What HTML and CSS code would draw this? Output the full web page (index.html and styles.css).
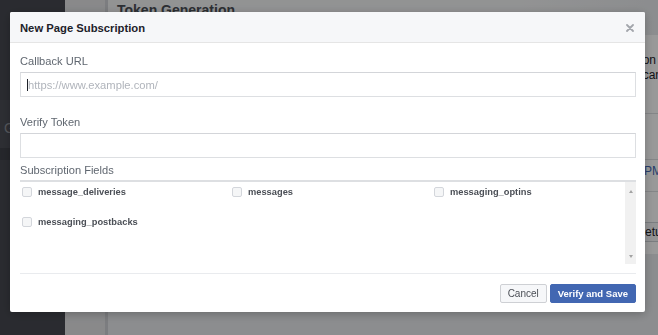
FILE: index.html
```html
<!DOCTYPE html>
<html>
<head>
<meta charset="utf-8">
<link rel="stylesheet" href="styles.css">
</head>
<body>
<div class="page">
  <aside class="sidebar">
    <div class="side-gap"></div>
    <div class="side-item">G</div>
    <div class="side-band"></div>
  </aside>
  <div class="rail"></div>
  <main class="main">
    <div class="main-title">Token Generation</div>
    <div class="card">
      <div class="sec sec1">
        <div class="rt">This page access token has permission i</div>
        <div class="rt">You can</div>
      </div>
      <div class="sec sec2"></div>
      <div class="sec sec3"><div class="rt link">12:00 PM</div></div>
      <div class="sec sec4"><div class="rbox">Setu</div></div>
    </div>
  </main>
</div>

<div class="overlay">
  <div class="modal">
    <div class="modal-header">
      <div class="modal-title">New Page Subscription</div>
      <svg class="close" width="8" height="8" viewBox="0 0 8 8"><path d="M1 1L7 7M7 1L1 7" stroke="#a3a6ac" stroke-width="1.8" stroke-linecap="round"/></svg>
    </div>
    <div class="modal-body">
      <div class="label first">Callback URL</div>
      <div class="input"><span class="caret"></span><span class="ph">https://www.example.com/</span></div>
      <div class="label second">Verify Token</div>
      <div class="input"></div>
      <div class="label third">Subscription Fields</div>
      <div class="fields">
        <div class="field-grid">
          <div class="field"><span class="cb"></span><span class="fl">message_deliveries</span></div>
          <div class="field"><span class="cb"></span><span class="fl">messages</span></div>
          <div class="field"><span class="cb"></span><span class="fl">messaging_optins</span></div>
          <div class="field"><span class="cb"></span><span class="fl">messaging_postbacks</span></div>
        </div>
        <div class="scrollbar">
          <span class="arr up"></span>
          <span class="arr down"></span>
        </div>
      </div>
    </div>
    <div class="modal-footer">
      <button class="btn cancel">Cancel</button>
      <button class="btn primary">Verify and Save</button>
    </div>
  </div>
</div>
</body>
</html>
```

FILE: styles.css
```css
html, body {
  margin: 0;
  padding: 0;
  width: 658px;
  height: 335px;
  overflow: hidden;
  font-family: "Liberation Sans", Arial, Helvetica, sans-serif;
}

.page {
  display: flex;
  width: 658px;
  height: 335px;
  background: #e9ebee;
}

.sidebar {
  width: 65px;
  flex: none;
  background: #474951;
  display: flex;
  flex-direction: column;
}
.side-gap { height: 100px; }
.side-item {
  color: #8d9099;
  font-size: 14px;
  padding-left: 4px;
  height: 48px;
  line-height: 56px;
  background: #4c4e56;
}
.side-band {
  height: 12px;
  background: #3f4149;
}

.rail {
  width: 40px;
  flex: none;
  background: #e4e5e7;
  border-right: 3px solid #cfd1d5;
}

.main {
  flex: 1;
  display: flex;
  flex-direction: column;
  overflow: hidden;
}
.main-title {
  height: 35px;
  padding-left: 9px;
  font-size: 14px;
  font-weight: bold;
  color: #4b4f56;
  line-height: 20px;
  background: linear-gradient(to right, #f4f5f6 0, #f4f5f6 75%, #e9ebee 100%);
}

.card {
  background: #fff;
  display: flex;
  flex-direction: column;
}
.sec { border-bottom: 1px solid #dddfe2; }
.sec1 { height: 79px; padding-top: 18px; box-sizing: border-box; }
.sec2 { height: 45px; }
.sec3 { height: 32px; padding-top: 4px; box-sizing: border-box; }
.sec4 { height: 62px; padding-top: 30px; box-sizing: border-box; border-bottom: none; }
.rt {
  text-align: right;
  white-space: nowrap;
  font-size: 12px;
  line-height: 15px;
  color: #1d2129;
  margin-right: -4px;
}
.link { color: #4267b2; }
.rbox {
  margin-left: auto;
  width: 40px;
  margin-right: -20px;
  border: 1px solid #ccd0d5;
  background: #f6f7f9;
  font-size: 12px;
  line-height: 18px;
  color: #1d2129;
  padding-left: 2px;
}

.overlay {
  position: fixed;
  inset: 0;
  background: rgba(0, 0, 0, 0.4);
  padding: 12px 13px 23px 10px;
  box-sizing: border-box;
  display: flex;
}

.modal {
  flex: 1;
  background: #fff;
  border-radius: 2px;
  box-shadow: 0 2px 10px rgba(0, 0, 0, 0.25);
  display: flex;
  flex-direction: column;
  overflow: hidden;
}

.modal-header {
  height: 30px;
  flex: none;
  background: #f6f7f9;
  border-bottom: 1px solid #e5e5e5;
  display: flex;
  align-items: center;
  justify-content: space-between;
  padding: 0 11px 0 10px;
}
.modal-title {
  font-size: 11.25px;
  font-weight: bold;
  color: #1d2129;
  padding-top: 1px;
}
.close {
  display: block;
  margin-top: 2px;
}

.modal-body {
  padding: 0 9px 0 10px;
  display: flex;
  flex-direction: column;
}
.label {
  font-size: 11.1px;
  line-height: 14px;
  color: #606770;
}
.label.first { margin-top: 11px; margin-bottom: 4px; }
.label.second { margin-top: 18px; margin-bottom: 4px; }
.label.third { margin-top: 5px; margin-bottom: 3px; }

.input {
  height: 25px;
  box-sizing: border-box;
  border: 1px solid #dddfe2;
  border-top-color: #d3d5d9;
  display: flex;
  align-items: center;
  padding-left: 6px;
}
.caret {
  width: 1px;
  height: 12px;
  background: #1d2129;
}
.ph {
  font-size: 11.2px;
  color: #b0b4bb;
}

.fields {
  border-top: 2px solid #dddfe2;
  height: 82px;
  display: flex;
}
.field-grid {
  flex: 1;
  display: grid;
  grid-template-columns: 210px 202px 1fr;
  grid-auto-rows: 20px;
  row-gap: 10px;
  padding-left: 2px;
  align-content: start;
}
.field {
  display: flex;
  align-items: center;
}
.cb {
  width: 10px;
  height: 10px;
  box-sizing: border-box;
  border: 1px solid #d3d6db;
  border-radius: 2px;
  background: #f5f6f7;
  margin-right: 6px;
  flex: none;
}
.fl {
  font-size: 9.3px;
  font-weight: bold;
  color: #4b4f56;
}

.scrollbar {
  width: 11px;
  flex: none;
  background: #f1f1f1;
  display: flex;
  flex-direction: column;
  justify-content: space-between;
  align-items: center;
  padding: 8px 0 6px;
  box-sizing: border-box;
}
.arr {
  width: 0;
  height: 0;
  border-left: 2.5px solid transparent;
  border-right: 2.5px solid transparent;
}
.arr.up { border-bottom: 3px solid #a3a3a3; }
.arr.down { border-top: 3px solid #a3a3a3; }

.modal-footer {
  margin: 9px 9px 0 10px;
  border-top: 1px solid #e9ebee;
  padding-top: 10px;
  display: flex;
  justify-content: flex-end;
  gap: 3px;
}
.btn {
  height: 19px;
  box-sizing: border-box;
  border: 1px solid;
  border-radius: 2px;
  font-family: "Liberation Sans", Arial, Helvetica, sans-serif;
  padding: 0 7px;
  margin: 0;
  line-height: 17px;
}
.cancel {
  background: #f6f7f9;
  border-color: #ced0d4;
  color: #4b4f56;
  font-size: 10px;
}
.primary {
  background: #4267b2;
  border-color: #4267b2;
  color: #fff;
  font-weight: bold;
  font-size: 9.5px;
}
```
